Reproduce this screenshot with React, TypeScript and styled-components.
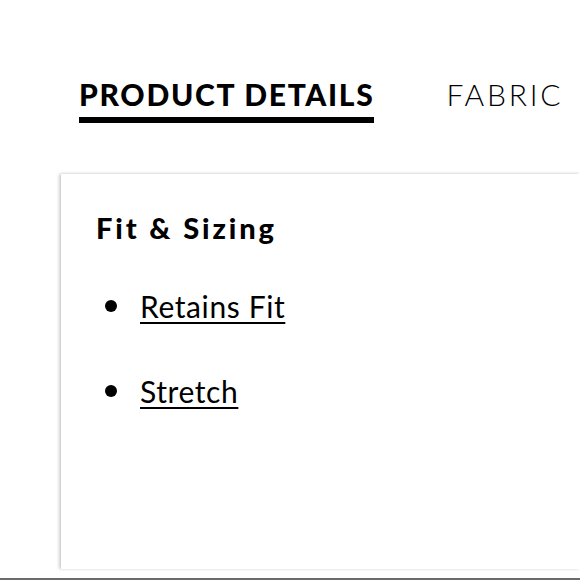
import React from "react";
import styled, { createGlobalStyle } from "styled-components";

const Global = createGlobalStyle`
  html, body { margin: 0; padding: 0; background: #fff; }
  body { font-family: "Lato", "Noto Sans", sans-serif; color: #000; overflow: hidden; }
`;

const Page = styled.div`
  width: 580px;
  height: 580px;
  box-sizing: border-box;
  border-bottom: 2px solid #6b6b6b;
  display: flex;
  flex-direction: column;
  overflow: hidden;
`;

const Tabs = styled.div`
  display: flex;
  gap: 72px;
  padding: 76px 0 0 79px;
  white-space: nowrap;
`;

const Tab = styled.div<{ $active?: boolean }>`
  font-size: 30px;
  line-height: 36px;
  letter-spacing: ${(p) => (p.$active ? "1.7px" : "2.8px")};
  font-weight: ${(p) => (p.$active ? 900 : 300)};
  padding-bottom: 5px;
  border-bottom: 6px solid ${(p) => (p.$active ? "#000" : "transparent")};
`;

const Card = styled.section`
  flex: 1;
  margin: 51px 0 9px 61px;
  background: #fff;
  box-shadow: -2px 0 3px rgba(0, 0, 0, 0.18), 0 -1px 3px rgba(0, 0, 0, 0.06);
  padding: 36px 0 0 35px;
`;

const Heading = styled.h2`
  margin: 0;
  font-size: 29px;
  line-height: 36px;
  font-weight: 900;
  letter-spacing: 2.9px;
`;

const List = styled.ul`
  list-style: none;
  margin: 42px 0 0;
  padding: 0 0 0 9px;
  display: flex;
  flex-direction: column;
  gap: 49px;
`;

const Item = styled.li`
  display: flex;
  align-items: center;
  gap: 23px;
  font-size: 30px;
  line-height: 36px;
  letter-spacing: 0.6px;
`;

const Dot = styled.span`
  width: 12px;
  height: 12px;
  border-radius: 50%;
  background: #000;
  flex: none;
`;

const Link = styled.a`
  color: #000;
  text-decoration: underline;
  text-decoration-thickness: 2px;
  text-underline-offset: 4px;
  font-weight: 400;
`;

export default function App() {
  return (
    <>
      <Global />
      <Page>
        <Tabs>
          <Tab $active>PRODUCT DETAILS</Tab>
          <Tab>FABRIC</Tab>
        </Tabs>
        <Card>
          <Heading>Fit &amp; Sizing</Heading>
          <List>
            <Item>
              <Dot />
              <Link>Retains Fit</Link>
            </Item>
            <Item>
              <Dot />
              <Link>Stretch</Link>
            </Item>
          </List>
        </Card>
      </Page>
    </>
  );
}
